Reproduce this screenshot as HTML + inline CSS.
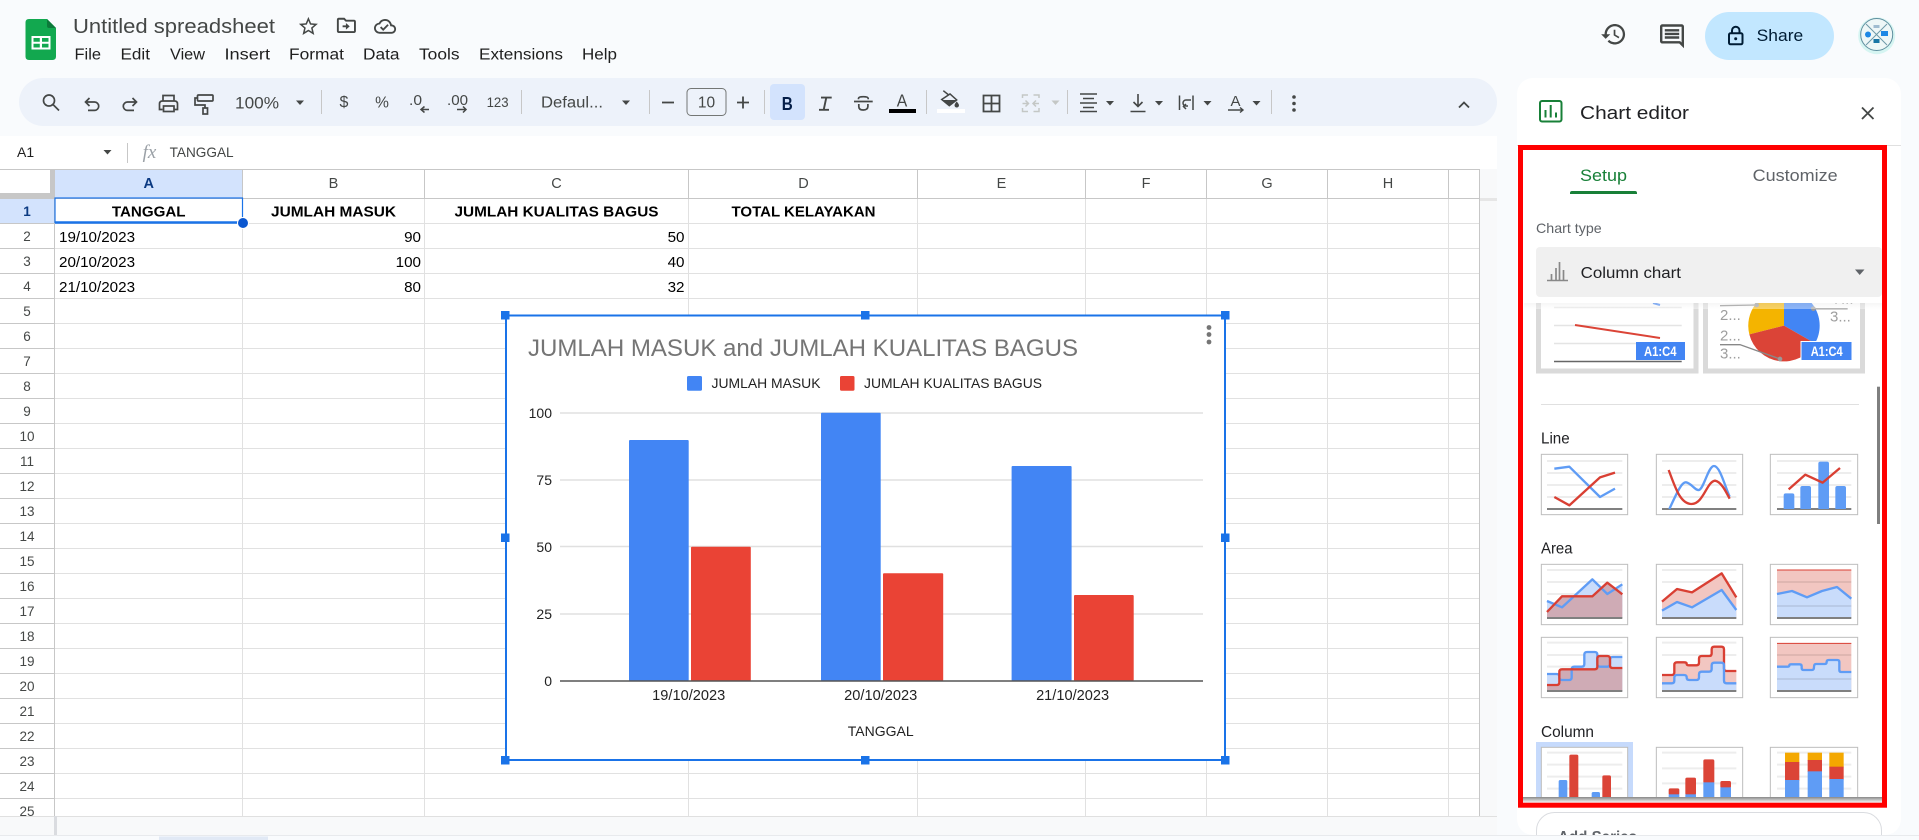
<!DOCTYPE html>
<html><head><meta charset="utf-8"><title>Untitled spreadsheet</title>
<style>
html,body{margin:0;padding:0;width:1919px;height:840px;overflow:hidden;background:#f9fbfd}
svg{display:block;position:absolute;left:0;top:0}
text{font-family:"Liberation Sans",sans-serif}
.m{font-size:15.5px;fill:#1f1f1f}
.c{font-size:15.2px;fill:#000}
.b{font-size:15.2px;fill:#000;font-weight:bold;text-anchor:middle}
.h{font-size:14.5px;fill:#444746;text-anchor:middle}
.r{font-size:13.5px;fill:#444746;text-anchor:middle}
.t{font-size:14.5px;fill:#444746}
.ax{font-size:14.6px;fill:#222}
.i{fill:none;stroke:#444746;stroke-width:1.7}
.f{fill:#444746}
.g{fill:none;stroke:#ededed;stroke-width:6}
.ab{fill:none;stroke:#808080;stroke-width:6}
.fr{fill:#fff;stroke:#bdbdbd;stroke-width:3}
.bl{fill:none;stroke:#5f9cf5;stroke-width:7;stroke-linejoin:round}
.rd{fill:none;stroke:#d93f33;stroke-width:7;stroke-linejoin:round}
.ba{fill:#c9dcfb}.ra{fill:#f2c6c1}.mx{fill:#cfabb5}
.pl{font-size:45px;fill:#9e9e9e}
.ln{fill:none;stroke:#888;stroke-width:4}
</style></head><body>
<svg width="1919" height="840" viewBox="0 0 1919 840" xmlns="http://www.w3.org/2000/svg">
<defs>
<clipPath id="gridclip"><rect x="0" y="169" width="1480" height="647"/></clipPath>
<clipPath id="pieclip"><rect x="1524" y="303" width="358" height="494"/></clipPath>
<clipPath id="addclip"><rect x="1520" y="808" width="370" height="27"/></clipPath>
<linearGradient id="sh1" x1="0" y1="0" x2="0" y2="1"><stop offset="0" stop-color="#888"/><stop offset="1" stop-color="#fff"/></linearGradient>
<linearGradient id="sh2" x1="0" y1="0" x2="0" y2="1"><stop offset="0" stop-color="#e8e8e8"/><stop offset="1" stop-color="#fff"/></linearGradient>
</defs>
<rect width="1919" height="840" fill="#f9fbfd"/>

<!-- logo -->
<path d="M29 19H47L56 28V56.500Q56 60 52.500 60H29Q25.500 60 25.500 56.500V22.500Q25.500 19 29 19Z" fill="#12a84f"/>
<path d="M47 19L56 28H49Q47 28 47 26Z" fill="#0c7a3a"/>
<path d="M31.500 36H50.500V49.500H31.500ZM33.500 38V41.800H39.800V38ZM42 38V41.800H48.500V38ZM33.500 43.700V47.500H39.800V43.700ZM42 43.700V47.500H48.500V43.700Z" fill="#fff" fill-rule="evenodd"/>

<!-- title -->
<text x="73" y="33" font-size="20.500" fill="#444746" textLength="202" lengthAdjust="spacingAndGlyphs">Untitled spreadsheet</text>
<g transform="translate(297,15) scale(.95)"><path fill="#444746" d="M22 9.240l-7.190-.620L12 2 9.190 8.630 2 9.240l5.460 4.730L5.820 21 12 17.270 18.180 21l-1.630-7.030L22 9.240zM12 15.400l-3.760 2.270 1-4.280-3.320-2.880 4.380-.380L12 6.100l1.710 4.040 4.380.380-3.320 2.880 1 4.280L12 15.400z"/></g>
<g transform="translate(335,14) scale(.95)"><path fill="#444746" d="M20 6h-8l-2-2H4c-1.100 0-2 .9-2 2v12c0 1.100.9 2 2 2h16c1.100 0 2-.9 2-2V8c0-1.100-.9-2-2-2zm0 12H4V6h5.170l2 2H20v10zm-8.500-1.500l4-3.500-4-3.500V12H8v2h3.500z"/></g>
<g transform="translate(374,15.300) scale(.92)"><path fill="#444746" d="M19.350 10.040C18.670 6.590 15.640 4 12 4 9.110 4 6.600 5.640 5.350 8.040 2.340 8.360 0 10.910 0 14c0 3.310 2.690 6 6 6h13c2.760 0 5-2.240 5-5 0-2.640-2.050-4.780-4.650-4.960zM19 18H6c-2.210 0-4-1.790-4-4 0-2.050 1.530-3.760 3.560-3.970l1.070-.11.5-.95C8.080 7.140 9.940 6 12 6c2.620 0 4.880 1.860 5.390 4.430l.3 1.500 1.530.11c1.560.1 2.780 1.410 2.780 2.960 0 1.650-1.350 3-3 3zm-9-3.820l-2.090-2.090L6.500 13.500 10 17l6.010-6.010-1.410-1.410z"/></g>

<!-- menu -->
<g class="menu">
<text class="m" x="74.500" y="59.500" textLength="26.500" lengthAdjust="spacingAndGlyphs">File</text>
<text class="m" x="120.500" y="59.500" textLength="29.500" lengthAdjust="spacingAndGlyphs">Edit</text>
<text class="m" x="170" y="59.500" textLength="35" lengthAdjust="spacingAndGlyphs">View</text>
<text class="m" x="224.500" y="59.500" textLength="45.500" lengthAdjust="spacingAndGlyphs">Insert</text>
<text class="m" x="289" y="59.500" textLength="55" lengthAdjust="spacingAndGlyphs">Format</text>
<text class="m" x="363" y="59.500" textLength="36.500" lengthAdjust="spacingAndGlyphs">Data</text>
<text class="m" x="419" y="59.500" textLength="40.500" lengthAdjust="spacingAndGlyphs">Tools</text>
<text class="m" x="479" y="59.500" textLength="84" lengthAdjust="spacingAndGlyphs">Extensions</text>
<text class="m" x="582" y="59.500" textLength="35" lengthAdjust="spacingAndGlyphs">Help</text>
</g>

<!-- right header -->
<g transform="translate(1600,20.600) scale(1.140)"><path fill="#444746" d="M13 3c-4.970 0-9 4.030-9 9H1l3.890 3.890.07.14L9 12H6c0-3.870 3.130-7 7-7s7 3.130 7 7-3.130 7-7 7c-1.930 0-3.680-.79-4.940-2.060l-1.420 1.420C8.270 19.990 10.510 21 13 21c4.970 0 9-4.030 9-9s-4.030-9-9-9zm-1 5v5l4.280 2.540.72-1.210-3.500-2.080V8H12z"/></g>
<g transform="translate(1657.600,21.900) scale(1.200)"><path fill="#444746" d="M21.990 4c0-1.100-.89-2-1.990-2H4c-1.100 0-2 .9-2 2v12c0 1.100.9 2 2 2h14l4 4-.01-18zM20 4v13.170L18.830 16H4V4h16zM6 12h12v2H6zm0-3h12v2H6zm0-3h12v2H6z"/></g>
<rect x="1705" y="12" width="129" height="48" rx="24" fill="#c2e7ff"/>
<g fill="none" stroke="#001d35" stroke-width="2"><rect x="1729" y="33.300" width="13.500" height="11" rx="1.500"/><path d="M1732 33V30.500a3.700 3.700 0 0 1 7.500 0V33"/></g><circle cx="1735.700" cy="38.800" r="1.500" fill="#001d35"/>
<text x="1756.700" y="41" font-size="16.500" fill="#001d35" textLength="46.500" lengthAdjust="spacingAndGlyphs">Share</text>
<circle cx="1876.700" cy="35.700" r="18.500" fill="#d6f5f2"/><circle cx="1876.700" cy="34.500" r="16" fill="#eef7f7" stroke="#5f8f9f" stroke-width="1"/>
<path d="M1866 24L1887 45M1887 24L1866 45" stroke="#6d9aa8" stroke-width="1"/>
<circle cx="1868" cy="34.500" r="3" fill="#1e88e5"/><rect x="1881" y="31" width="7" height="5" fill="#1e88e5"/><rect x="1873.500" y="39" width="6" height="4" fill="#1976a5"/><rect x="1873.500" y="25" width="6" height="3" fill="#a0bcd0"/>

<!-- toolbar -->
<rect x="19" y="78" width="1478" height="48" rx="24" fill="#edf2fa"/>
<g class="i">
<circle cx="49" cy="100.500" r="5.500"/><path d="M53 104.500L59 110.500"/>
<path d="M89.500 98L85.500 102L89.500 106M85.500 102H94.500a4.200 4.200 0 0 1 0 8.400H88"/>
<path d="M132.500 98L136.500 102L132.500 106M136.500 102H127.500a4.200 4.200 0 0 0 0 8.400H134"/>
<path d="M163 101V95.500H174V101M162.500 109.500H159.500V104Q159.500 101 162.500 101H174.500Q177.500 101 177.500 104V109.500H174.500"/><rect x="163.500" y="106" width="10.500" height="5.500"/>
<rect x="197.500" y="95" width="15.500" height="6" rx="1"/><path d="M197 98H195V105H205V108"/><rect x="203" y="108" width="4.500" height="6"/>
</g>
<text x="235" y="108.700" textLength="44" lengthAdjust="spacingAndGlyphs" font-size="16.500" fill="#444746">100%</text>
<path class="f" d="M296 100.500H304L300 105Z"/>
<path d="M321.500 90V114M521.500 90V114M649.500 90V114M764.500 90V114M926.500 90V114M1067.500 90V114M1271.500 90V114" stroke="#c7c7c7" stroke-width="1"/>
<text class="t" x="344" y="107" text-anchor="middle" style="font-size:16px">$</text>
<text class="t" x="382" y="107.500" text-anchor="middle" style="font-size:15.500px">%</text>
<text class="t" x="409" y="105" style="font-size:15px" textLength="13" lengthAdjust="spacingAndGlyphs">.0</text>
<path class="i" d="M429 109.500H421M424.500 106.500L421 109.500L424.500 112.500" style="stroke-width:1.500"/>
<text class="t" x="447" y="105" style="font-size:15px" textLength="21" lengthAdjust="spacingAndGlyphs">.00</text>
<path class="i" d="M457 109.500H466M463 106.500L466 109.500L463 112.500" style="stroke-width:1.500"/>
<text class="t" x="486.600" y="107" textLength="22" lengthAdjust="spacingAndGlyphs" style="font-size:14px">123</text>
<text class="t" x="541" y="107.500" textLength="62" lengthAdjust="spacingAndGlyphs" style="font-size:15.500px">Defaul...</text>
<path class="f" d="M622 100.500H630L626 105Z"/>
<path d="M662 102.500H674" stroke="#444746" stroke-width="1.800"/>
<rect x="687" y="88.500" width="39" height="27" rx="4" fill="none" stroke="#747775" stroke-width="1"/>
<text class="t" x="706.500" y="107.500" text-anchor="middle" style="font-size:15.500px">10</text>
<path d="M737 102.500H749M743 96.500V108.500" stroke="#444746" stroke-width="1.800"/>
<rect x="770" y="84" width="35" height="36" rx="4" fill="#d3e3fd"/>
<text x="781.700" y="110" font-size="18.500" font-weight="bold" fill="#041e49" textLength="11" lengthAdjust="spacingAndGlyphs">B</text>
<path d="M821 97.600H831.700M819 109.800H829M826.300 97.600L823.700 109.800" fill="none" stroke="#444746" stroke-width="1.900"/>
<path class="i" d="M854 101.500H872.700M858.500 99.300V98.500Q858.500 96.700 863.300 96.700T868.200 98.500V99.300M858.800 104V106.500Q858.800 110 863.300 110T867.900 106.500V104"/>
<text x="896.700" y="106.700" font-size="17.500" fill="#444746" textLength="10.500" lengthAdjust="spacingAndGlyphs">A</text>
<rect x="889" y="109" width="27" height="4" fill="#000"/>
<path d="M943.300 90.700L950 96" stroke="#444746" stroke-width="1.500"/>
<path d="M941.700 99.500L950 94L956.700 100L949.300 105.700Z" fill="#edf2fa" stroke="#444746" stroke-width="1.500"/>
<path d="M942 100H956.500L949.300 105.700Z" fill="#444746"/>
<path d="M956.700 101.500Q959 104 959 105.300A2.200 2.200 0 0 1 954.500 105.300Q954.500 104 956.700 101.500Z" fill="#444746"/>
<rect x="937" y="109" width="28" height="4" fill="#fff"/>
<path class="i" d="M983.500 95.500H999.500V111.500H983.500ZM991.500 95.500V111.500M983.500 103.500H999.500" style="stroke-width:1.800"/>
<path d="M1028 95H1022.500V98M1022.500 108V111.500H1028M1033.500 95H1039V98M1039 108V111.500H1033.500M1022.500 103.500H1028M1025.500 100.500L1028.500 103.500L1025.500 106.500M1039 103.500H1033.500M1036 100.500L1033 103.500L1036 106.500" fill="none" stroke="#c4c7c5" stroke-width="1.500"/>
<path d="M1051.500 100.500H1059.500L1055.500 105Z" fill="#c4c7c5"/>
<path d="M1080 94H1097M1083 98.500H1094M1080 103H1097M1083 107.500H1094M1080 111.500H1097" stroke="#444746" stroke-width="1.600"/>
<path class="f" d="M1106 101H1114L1110 105.500Z"/>
<path class="i" d="M1138 94V106M1133.500 102L1138 106.500L1142.500 102M1130.500 111.500H1145.500" style="stroke-width:1.600"/>
<path class="f" d="M1155 101H1163L1159 105.500Z"/>
<path class="i" d="M1179.500 95.500V110M1193 95.500V110M1191 100H1186a3 3 0 0 0 0 6H1188M1186 104L1183.500 106.500L1186 109" style="stroke-width:1.500"/>
<path class="f" d="M1203.500 101H1211.500L1207.500 105.500Z"/>
<text x="1235.500" y="106" text-anchor="middle" font-size="15" fill="#444746">A</text>
<path class="i" d="M1228 110H1243M1240 107.500L1243 110L1240 112.500" style="stroke-width:1.400"/>
<path class="f" d="M1252.500 101H1260.500L1256.500 105.500Z"/>
<circle class="f" cx="1294" cy="97" r="1.800"/><circle class="f" cx="1294" cy="103.500" r="1.800"/><circle class="f" cx="1294" cy="110" r="1.800"/>
<path class="i" d="M1459 107.500L1464 102.500L1469 107.500" style="stroke-width:1.800"/>

<!-- formula bar -->
<rect x="0" y="136" width="1497" height="33.500" fill="#fff"/>
<text class="t" x="17" y="157" style="font-size:14px;fill:#1f1f1f">A1</text>
<path class="f" d="M103.500 150H111.500L107.500 154.500Z"/>
<path d="M127.500 143V163" stroke="#c7c7c7"/>
<text x="149.500" y="158" text-anchor="middle" font-size="19" font-style="italic" fill="#9aa0a6" style="font-family:'Liberation Serif',serif">fx</text>
<text class="t" x="169.600" y="157" textLength="64" lengthAdjust="spacingAndGlyphs" style="font-size:14px">TANGGAL</text>

<!-- grid -->
<rect x="0" y="169" width="1479" height="647" fill="#fff"/>
<rect x="1479" y="169" width="18" height="647" fill="#f8f9fa"/>
<rect x="1479" y="198" width="18" height="3" fill="#e6e6e6"/>
<rect x="55" y="169" width="187" height="29" fill="#d3e3fd"/>
<rect x="0" y="198" width="55" height="25" fill="#d3e3fd"/>
<g clip-path="url(#gridclip)">
<g stroke="#e1e1e1" stroke-width="1.200" shape-rendering="crispEdges">
<path d="M55 223.500H1479M55 248.500H1479M55 273.500H1479M55 298.500H1479M55 323.500H1479M55 348.500H1479M55 373.500H1479M55 398.500H1479M55 423.500H1479M55 448.500H1479M55 473.500H1479M55 498.500H1479M55 523.500H1479M55 548.500H1479M55 573.500H1479M55 598.500H1479M55 623.500H1479M55 648.500H1479M55 673.500H1479M55 698.500H1479M55 723.500H1479M55 748.500H1479M55 773.500H1479M55 798.500H1479"/>
<path d="M242.500 198V816M424.500 198V816M688.500 198V816M917.500 198V816M1085.500 198V816M1206.500 198V816M1327.500 198V816M1448.500 198V816"/>
</g>
<g stroke="#c7c7c7" shape-rendering="crispEdges">
<path d="M0 169.500H1497M0 198.500H1479M0 223.500H55M0 248.500H55M0 273.500H55M0 298.500H55M0 323.500H55M0 348.500H55M0 373.500H55M0 398.500H55M0 423.500H55M0 448.500H55M0 473.500H55M0 498.500H55M0 523.500H55M0 548.500H55M0 573.500H55M0 598.500H55M0 623.500H55M0 648.500H55M0 673.500H55M0 698.500H55M0 723.500H55M0 748.500H55M0 773.500H55M0 798.500H55"/>
<path d="M54.500 169V816M242.500 169V198M424.500 169V198M688.500 169V198M917.500 169V198M1085.500 169V198M1206.500 169V198M1327.500 169V198M1448.500 169V198M1479.500 169V816"/>
</g>
<rect x="50" y="169" width="5" height="29" fill="#c7c7c7"/><rect x="0" y="193" width="55" height="5" fill="#c7c7c7"/>
<g>
<text class="h" x="148.700" y="188" style="fill:#0b3a82;font-weight:bold">A</text>
<text class="h" x="333.500" y="188">B</text><text class="h" x="556.500" y="188">C</text><text class="h" x="803.500" y="188">D</text><text class="h" x="1001.500" y="188">E</text><text class="h" x="1146" y="188">F</text><text class="h" x="1267" y="188">G</text><text class="h" x="1388" y="188">H</text>
</g>
<g>
<text class="r" x="27" y="216" style="font-weight:bold;fill:#0b3a82">1</text>
<text class="r" x="27" y="241">2</text><text class="r" x="27" y="266">3</text><text class="r" x="27" y="291">4</text><text class="r" x="27" y="316">5</text><text class="r" x="27" y="341">6</text><text class="r" x="27" y="366">7</text><text class="r" x="27" y="391">8</text><text class="r" x="27" y="416">9</text><text class="r" x="27" y="441">10</text><text class="r" x="27" y="466">11</text><text class="r" x="27" y="491">12</text><text class="r" x="27" y="516">13</text><text class="r" x="27" y="541">14</text><text class="r" x="27" y="566">15</text><text class="r" x="27" y="591">16</text><text class="r" x="27" y="616">17</text><text class="r" x="27" y="641">18</text><text class="r" x="27" y="666">19</text><text class="r" x="27" y="691">20</text><text class="r" x="27" y="716">21</text><text class="r" x="27" y="741">22</text><text class="r" x="27" y="766">23</text><text class="r" x="27" y="791">24</text><text class="r" x="27" y="816">25</text>
</g>
<text class="b" x="148.700" y="216.500" textLength="73.700" lengthAdjust="spacingAndGlyphs">TANGGAL</text>
<text class="b" x="333.500" y="216.500" textLength="125" lengthAdjust="spacingAndGlyphs">JUMLAH MASUK</text>
<text class="b" x="556.500" y="216.500" textLength="204" lengthAdjust="spacingAndGlyphs">JUMLAH KUALITAS BAGUS</text>
<text class="b" x="803.500" y="216.500" textLength="144" lengthAdjust="spacingAndGlyphs">TOTAL KELAYAKAN</text>
<text class="c" x="59" y="242">19/10/2023</text><text class="c" x="59" y="267">20/10/2023</text><text class="c" x="59" y="292">21/10/2023</text>
<text class="c" x="421" y="242" text-anchor="end">90</text><text class="c" x="421" y="267" text-anchor="end">100</text><text class="c" x="421" y="292" text-anchor="end">80</text>
<text class="c" x="684.500" y="242" text-anchor="end">50</text><text class="c" x="684.500" y="267" text-anchor="end">40</text><text class="c" x="684.500" y="292" text-anchor="end">32</text>
<rect x="55" y="198" width="187.500" height="24.500" fill="none" stroke="#1a73e8" stroke-width="1.200"/>
<path d="M55 222.500H242" stroke="#1a73e8" stroke-width="2.500"/>
<circle cx="243" cy="223" r="5.500" fill="#0b57d0" stroke="#fff" stroke-width="1"/>
</g>

<!-- chart -->
<rect x="505.500" y="315.500" width="719.500" height="444.500" fill="#fff"/>
<text x="528" y="356" font-size="24.500" fill="#757575" textLength="550" lengthAdjust="spacingAndGlyphs">JUMLAH MASUK and JUMLAH KUALITAS BAGUS</text>
<rect x="687" y="376" width="15" height="14.700" rx="1.500" fill="#4285f4"/>
<text x="711.500" y="388" font-size="14" fill="#222" textLength="109" lengthAdjust="spacingAndGlyphs">JUMLAH MASUK</text>
<rect x="840" y="376" width="14.500" height="14.700" rx="1.500" fill="#ea4335"/>
<text x="864" y="388" font-size="14" fill="#222" textLength="178" lengthAdjust="spacingAndGlyphs">JUMLAH KUALITAS BAGUS</text>
<path d="M560 413H1203M560 480H1203M560 546.500H1203M560 614H1203" stroke="#e0e0e0" stroke-width="1.500"/>
<g fill="#4285f4"><rect x="629" y="440" width="59.700" height="241" rx="1"/><rect x="821" y="412.700" width="59.700" height="268.300" rx="1"/><rect x="1011.600" y="466" width="60" height="215" rx="1"/></g>
<g fill="#ea4335"><rect x="691" y="546.700" width="59.800" height="134.300" rx="1"/><rect x="883" y="573.300" width="60.200" height="107.700" rx="1"/><rect x="1074" y="595" width="59.700" height="86" rx="1"/></g>
<path d="M560 681H1203" stroke="#555" stroke-width="1.500"/>
<g class="yl">
<text x="552" y="418" text-anchor="end" font-size="14" fill="#222">100</text><text x="552" y="485" text-anchor="end" font-size="14" fill="#222">75</text><text x="552" y="552" text-anchor="end" font-size="14" fill="#222">50</text><text x="552" y="619" text-anchor="end" font-size="14" fill="#222">25</text><text x="552" y="686" text-anchor="end" font-size="14" fill="#222">0</text>
<text class="ax" x="688.700" y="700" text-anchor="middle">19/10/2023</text><text class="ax" x="880.700" y="700" text-anchor="middle">20/10/2023</text><text class="ax" x="1072.600" y="700" text-anchor="middle">21/10/2023</text>
<text x="880.700" y="736" text-anchor="middle" font-size="14" fill="#222">TANGGAL</text>
</g>
<circle cx="1209" cy="327.500" r="2.400" fill="#757575"/><circle cx="1209" cy="334.500" r="2.400" fill="#757575"/><circle cx="1209" cy="342" r="2.400" fill="#757575"/>
<g fill="#1a73e8">
<rect x="505" y="314.500" width="2" height="446"/><rect x="1224" y="314.500" width="2" height="446"/>
<rect x="505" y="314.500" width="721" height="2"/><rect x="505" y="759" width="721" height="2"/>
<rect x="501" y="311" width="8.500" height="8.500"/><rect x="861" y="311" width="8.500" height="8.500"/><rect x="1221" y="311" width="8.500" height="8.500"/>
<rect x="501" y="533.500" width="8.500" height="8.500"/><rect x="1221" y="533.500" width="8.500" height="8.500"/>
<rect x="501" y="756" width="8.500" height="8.500"/><rect x="861" y="756" width="8.500" height="8.500"/><rect x="1221" y="756" width="8.500" height="8.500"/>
</g>

<!-- bottom -->
<rect x="0" y="816" width="1497" height="19" fill="#f8f9fa"/>
<path d="M0 816.500H1497" stroke="#e0e0e0"/>
<rect x="54" y="816" width="3" height="19" fill="#dadce0"/>
<path d="M0 835.500H1919" stroke="#e8eaed"/>
<rect x="159" y="836.500" width="109" height="3.500" fill="#e1e9f5"/>

<!-- chart editor panel -->
<rect x="1517" y="78" width="384" height="757" rx="16" fill="#fff"/>
<rect x="1540" y="101" width="21.500" height="20.500" rx="2" fill="none" stroke="#188038" stroke-width="2"/>
<path d="M1545.500 110V117.500M1550.700 105V117.500M1556 112.500V117.500" stroke="#188038" stroke-width="2"/>
<text x="1580" y="119" font-size="18.500" fill="#202124" textLength="109" lengthAdjust="spacingAndGlyphs">Chart editor</text>
<path d="M1862 107.500L1873.500 119M1873.500 107.500L1862 119" stroke="#444746" stroke-width="1.800"/>
<path d="M1517 145.500H1901" stroke="#e0e0e0"/>

<text x="1580" y="181" font-size="16.500" font-weight="500" fill="#188038" textLength="47" lengthAdjust="spacingAndGlyphs">Setup</text>
<path d="M1570 194V193Q1570 191 1572 191H1635Q1637 191 1637 193V194Z" fill="#188038"/>
<text x="1752.700" y="181" font-size="16.500" fill="#5f6368" textLength="85" lengthAdjust="spacingAndGlyphs">Customize</text>
<text x="1536" y="233" font-size="14" fill="#5f6368" textLength="65.700" lengthAdjust="spacingAndGlyphs">Chart type</text>

<!-- scrolled thumbnails -->
<g clip-path="url(#pieclip)">
<rect x="1538.500" y="290" width="157.500" height="81" fill="#fff" stroke="#dadada" stroke-width="5"/>
<rect x="1705.500" y="290" width="157" height="81" fill="#fff" stroke="#dadada" stroke-width="5"/>
<path d="M1554 307.500H1681.700M1554 325.500H1681.700M1554 343.500H1681.700" stroke="#e4e4e4" stroke-width="1.500"/>
<path d="M1554 361.500H1681.700" stroke="#666" stroke-width="1.500"/>
<path d="M1575 325L1660 338" stroke="#db4437" stroke-width="2"/>
<path d="M1653 303L1660 305" stroke="#4285f4" stroke-width="2"/>
<rect x="1636" y="342" width="49" height="18" fill="#4285f4"/>
<text x="1644" y="356" font-size="13.500" font-weight="bold" fill="#fff" textLength="32.500" lengthAdjust="spacingAndGlyphs">A1:C4</text>
<g transform="translate(1500,0) scale(.33333)">
<path d="M852 977L852 870A107 107 0 0 0 748 1003Z" fill="#f4b400"/>
<path d="M852 977L852 870A107 107 0 0 1 945 1030Z" fill="#4285f4"/>
<path d="M852 977L945 1030A107 107 0 0 1 748 1003Z" fill="#db4437"/>
<path class="ln" d="M660 917L770 915"/><circle cx="770" cy="915" r="7" fill="#999"/>
<path class="ln" d="M940 926H1043"/><circle cx="940" cy="926" r="7" fill="#999"/>
<path class="ln" d="M660 1034H720L840 1077"/><circle cx="840" cy="1077" r="7" fill="#999"/>
<text class="pl" x="660" y="960">2...</text><text class="pl" x="990" y="965">3...</text><text class="pl" x="660" y="1022">2...</text><text class="pl" x="660" y="1075">3...</text>
<text class="pl" x="998" y="912">7...</text>
</g>
<rect x="1801" y="341.500" width="51" height="19" fill="#4285f4" stroke="#fff" stroke-width="1"/>
<text x="1810.700" y="356" font-size="13.500" font-weight="bold" fill="#fff" textLength="32" lengthAdjust="spacingAndGlyphs">A1:C4</text>

<path d="M1541 404.500H1859" stroke="#e0e0e0"/>
<text x="1541" y="443.500" font-size="15.500" fill="#202124" textLength="28.700" lengthAdjust="spacingAndGlyphs">Line</text>
<text x="1541" y="553.500" font-size="15.500" fill="#202124" textLength="31.500" lengthAdjust="spacingAndGlyphs">Area</text>
<text x="1541" y="737" font-size="15.500" fill="#202124" textLength="53" lengthAdjust="spacingAndGlyphs">Column</text>

<g transform="translate(1500,400) scale(.33333)">
<!-- Line -->
<rect class="fr" x="124" y="163" width="259" height="181"/>
<path class="g" d="M141 183H367M141 219H367M141 255H367M141 291H367"/><path class="ab" d="M141 327H367"/>
<path class="bl" d="M163 206L208 200L300 291L345 266"/><path class="rd" d="M163 291L208 316L300 232L345 218"/>

<rect class="fr" x="469" y="163" width="259" height="181"/>
<path class="g" d="M486 183H709M486 219H709M486 255H709M486 291H709"/><path class="ab" d="M486 327H709"/>
<path class="bl" d="M508 327C530 280 545 245 558 247C575 250 585 272 597 270C612 265 625 198 642 198C660 198 675 260 689 290"/>
<path class="rd" d="M506 210C525 260 540 312 575 312C610 312 620 245 645 242C665 245 680 280 689 296"/>

<rect class="fr" x="811" y="163" width="262" height="181"/>
<path class="g" d="M831 183H1054M831 219H1054M831 255H1054M831 291H1054"/><path class="ab" d="M831 327H1054"/>
<g fill="#5f9cf5"><path d="M851 327V286Q851 280 857 280H877Q883 280 883 286V327Z"/><path d="M901 327V264Q901 258 907 258H927Q933 258 933 264V327Z"/><path d="M955 327V191Q955 185 961 185H981Q987 185 987 191V327Z"/><path d="M1006 327V264Q1006 258 1012 258H1032Q1038 258 1038 264V327Z"/></g>
<path class="rd" d="M866 268L916 224L968 248L1020 204"/>

<!-- Area 1 -->
<rect class="fr" x="124" y="493" width="259" height="181"/>
<path class="g" d="M141 510H367M141 546H367M141 582H367M141 618H367"/>
<path class="ba" d="M141 603L186 622L277 538L322 582L367 553V654H141Z"/>
<path class="mx" d="M141 636L186 589H277L322 548L367 583V654H141Z"/>
<path class="ab" d="M141 654H367"/>
<path class="bl" d="M141 603L186 622L277 538L322 582L367 553"/><path class="rd" d="M141 636L186 589H277L322 548L367 583"/>

<rect class="fr" x="469" y="493" width="259" height="181"/>
<path class="g" d="M486 510H709M486 546H709"/>
<path class="ra" d="M486 605L531 567L576 577L665 520L709 592V654H486Z"/>
<path class="ba" d="M486 632L531 606L576 622L665 570L709 630V654H486Z"/>
<path class="ab" d="M486 654H709"/>
<path class="rd" d="M486 605L531 567L576 577L665 520L709 592"/><path class="bl" d="M486 632L531 606L576 622L665 570L709 630"/>

<rect class="fr" x="811" y="493" width="262" height="181"/>
<path class="ra" d="M831 510H1054V654H831Z"/>
<path class="ba" d="M831 582L876 573L921 592L966 573L1011 561L1054 596V654H831Z"/>
<path class="g" d="M831 546H1054M831 618H1054" style="stroke:#00000014"/>
<path class="ab" d="M831 654H1054"/>
<path class="rd" d="M831 510H1054" style="stroke-width:3"/><path class="bl" d="M831 582L876 573L921 592L966 573L1011 561L1054 596"/>

<!-- Area 2 stepped -->
<rect class="fr" x="124" y="712" width="259" height="181"/>
<path class="g" d="M141 728H367M141 765H367M141 800H367"/>
<path class="ba" d="M141 822H178V840H215V800H253V756H292V800H330V771H367V873H141Z"/>
<path class="mx" d="M141 855H178V808H292V768H330V804H367V873H141Z"/>
<path class="ab" d="M141 873H367"/>
<path class="bl" d="M141 822H170Q178 822 178 830V832Q178 840 186 840H207Q215 840 215 832V808Q215 800 223 800H245Q253 800 253 792V764Q253 756 261 756H284Q292 756 292 764V792Q292 800 300 800H322Q330 800 330 792V779Q330 771 338 771H367"/>
<path class="rd" d="M141 855H170Q178 855 178 847V816Q178 808 186 808H284Q292 808 292 800V776Q292 768 300 768H322Q330 768 330 776V796Q330 804 338 804H367"/>

<rect class="fr" x="469" y="712" width="259" height="181"/>
<path class="g" d="M486 728H709M486 765H709"/>
<path class="ra" d="M486 825H523V787H560V796H597V768H635V740H672V813H709V873H486Z"/>
<path class="ba" d="M486 850H523V825H560V840H597V815H635V788H672V850H709V873H486Z"/>
<path class="ab" d="M486 873H709"/>
<path class="rd" d="M486 825H515Q523 825 523 817V795Q523 787 531 787H552Q560 787 560 791V792Q560 796 568 796H589Q597 796 597 788V776Q597 768 605 768H627Q635 768 635 760V748Q635 740 643 740H664Q672 740 672 748V805Q672 813 680 813H709"/>
<path class="bl" d="M486 850H515Q523 850 523 842V833Q523 825 531 825H552Q560 825 560 832V833Q560 840 568 840H589Q597 840 597 832V823Q597 815 605 815H627Q635 815 635 807V796Q635 788 643 788H664Q672 788 672 796V842Q672 850 680 850H709"/>

<rect class="fr" x="811" y="712" width="262" height="181"/>
<path class="ra" d="M831 729H1054V873H831Z"/>
<path class="ba" d="M831 800H868V793H905V810H942V792H980V780H1018V816H1054V873H831Z"/>
<path class="g" d="M831 765H1054M831 837H1054" style="stroke:#00000014"/>
<path class="ab" d="M831 873H1054"/>
<path class="rd" d="M831 730H1054" style="stroke-width:3"/>
<path class="bl" d="M831 800H862Q868 800 868 796Q868 793 874 793H899Q905 793 905 799V804Q905 810 911 810H936Q942 810 942 801Q942 792 948 792H974Q980 792 980 786Q980 780 986 780H1012Q1018 780 1018 786V810Q1018 816 1024 816H1054"/>

<!-- Column -->
<rect x="108" y="1026" width="291" height="200" fill="#c6dafc"/>
<rect class="fr" x="124" y="1042" width="259" height="181"/>
<path class="g" d="M141 1058H367M141 1094H367M141 1130H367M141 1166H367"/>
<rect x="176" y="1140" width="26" height="90" rx="5" fill="#5f9cf5"/><rect x="208" y="1064" width="27" height="166" rx="5" fill="#db4437"/><rect x="275" y="1176" width="25" height="54" rx="5" fill="#5f9cf5"/><rect x="307" y="1126" width="26" height="104" rx="5" fill="#db4437"/>

<rect class="fr" x="469" y="1042" width="259" height="181"/>
<path class="g" d="M486 1058H709M486 1105H709M486 1150H709"/>
<g fill="#db4437"><rect x="506" y="1165" width="32" height="20" rx="5"/><rect x="556" y="1133" width="32" height="52" rx="5"/><rect x="610" y="1078" width="33" height="72" rx="5"/><rect x="661" y="1143" width="32" height="21" rx="5"/></g>
<g fill="#5f9cf5"><rect x="506" y="1183" width="32" height="45"/><rect x="556" y="1183" width="32" height="45"/><rect x="610" y="1147" width="33" height="80"/><rect x="661" y="1162" width="32" height="65"/></g>

<rect class="fr" x="811" y="1042" width="262" height="181"/>
<path class="g" d="M831 1058H1054M831 1094H1054M831 1130H1054M831 1166H1054"/>
<g fill="#f4a800"><rect x="855" y="1058" width="43" height="30"/><rect x="923" y="1058" width="43" height="24"/><rect x="988" y="1058" width="43" height="44"/></g>
<g fill="#db4437"><rect x="855" y="1086" width="43" height="56"/><rect x="923" y="1080" width="43" height="36"/><rect x="988" y="1100" width="43" height="39"/></g>
<g fill="#5f9cf5"><rect x="855" y="1140" width="43" height="90"/><rect x="923" y="1114" width="43" height="116"/><rect x="988" y="1137" width="43" height="93"/></g>
</g>
</g>

<!-- dropdown -->
<rect x="1524" y="297" width="358" height="6" fill="#fff"/>
<rect x="1536" y="247" width="346" height="50" rx="4" fill="#f0f0f0"/>
<rect x="1524" y="303" width="358" height="6" fill="url(#sh2)" opacity=".4"/>
<path d="M1547 280.500H1568" stroke="#888" stroke-width="1.500"/>
<path d="M1551.500 274V280M1556 268V280M1559.500 262V280M1563.500 270V280" stroke="#888" stroke-width="1.700"/>
<text x="1580.700" y="278" font-size="15.500" fill="#202124" textLength="100.300" lengthAdjust="spacingAndGlyphs">Column chart</text>
<path d="M1855 269.500H1864.500L1859.700 275Z" fill="#5f6368"/>

<!-- scrollbar -->
<rect x="1877" y="386.700" width="3" height="137.300" fill="#7f7f7f"/>

<!-- bottom shadow + red frame -->
<rect x="1523" y="797" width="359" height="6" fill="url(#sh1)"/>
<g clip-path="url(#addclip)">
<rect x="1536.500" y="812.500" width="345" height="50" rx="18" fill="#fff" stroke="#dadce0"/>
<text x="1558" y="842" font-size="15.500" font-weight="bold" fill="#5f6368" textLength="79" lengthAdjust="spacingAndGlyphs">Add Series</text>
</g>
<rect x="1520.500" y="147.500" width="364" height="657.700" fill="none" stroke="#ff0000" stroke-width="5"/>
</svg>
</body></html>
